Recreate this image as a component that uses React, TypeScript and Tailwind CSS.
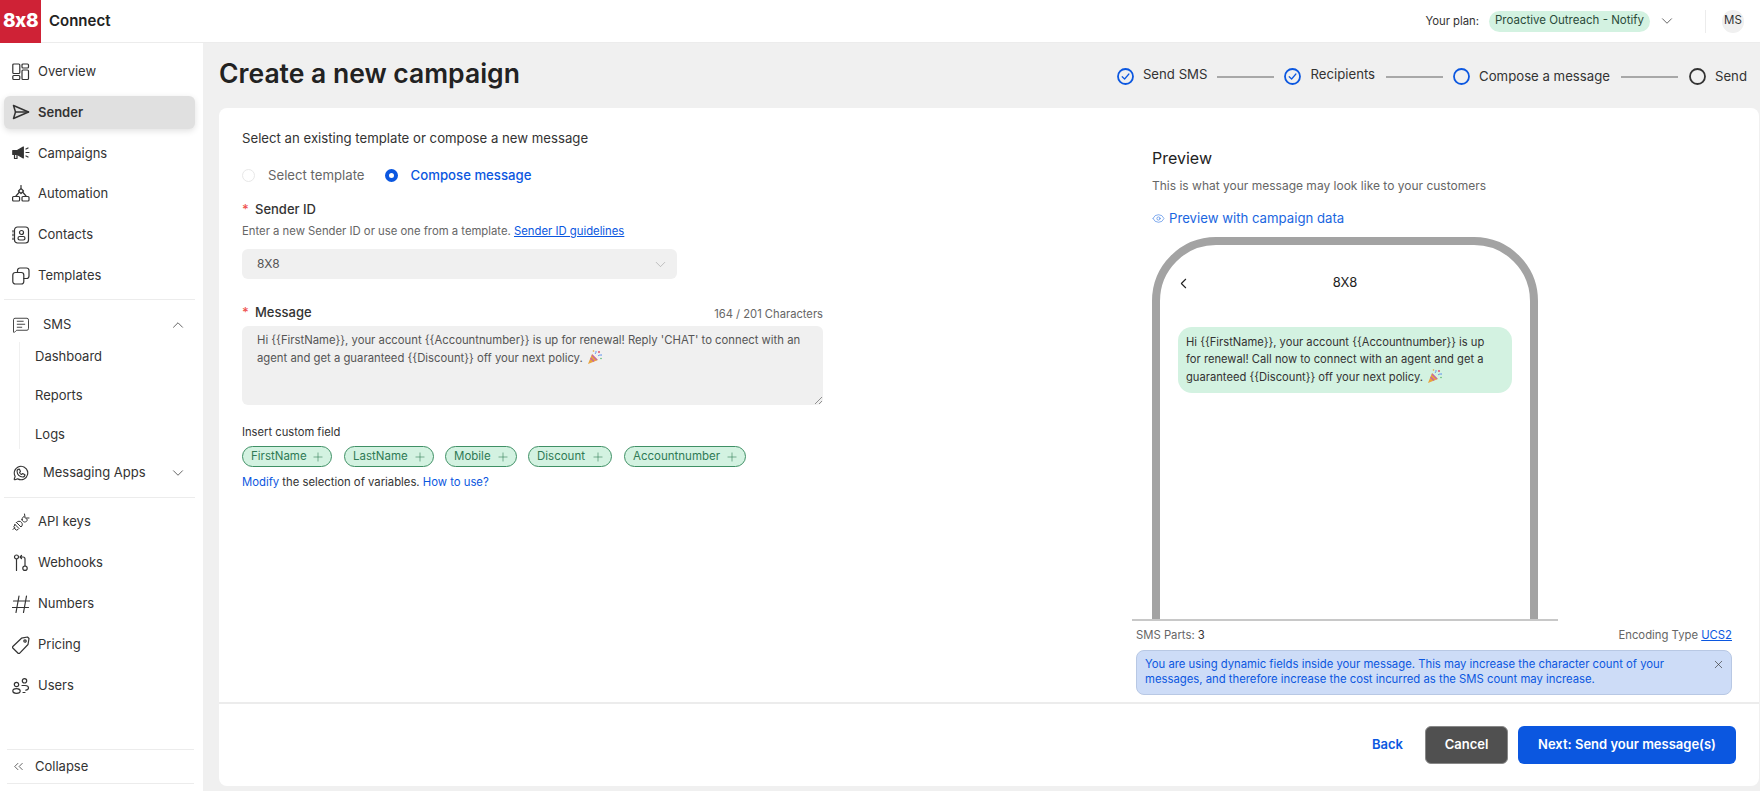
import type { ReactNode } from 'react';
import { ChevronDown, ChevronLeft, ChevronUp, ChevronsLeft, Eye, MessageSquareText, Plus, X } from 'lucide-react';
import { PiWhatsappLogo } from 'react-icons/pi';

const font = { fontFamily: 'Inter, "Noto Sans", sans-serif' };

const replyText = "Hi {{FirstName}}, your account {{Accountnumber}} is up for renewal! Reply 'CHAT' to connect with an agent and get a guaranteed {{Discount}} off your next policy. ";
const previewText = 'Hi {{FirstName}}, your account {{Accountnumber}} is up for renewal! Call now to connect with an agent and get a guaranteed {{Discount}} off your next policy. ';

function Icon({ children }: { children: ReactNode }) {
  return (
    <svg width="18" height="18" viewBox="0 0 18 18" fill="none" stroke="#333" strokeWidth="1.2" strokeLinecap="round" strokeLinejoin="round" className="shrink-0">
      {children}
    </svg>
  );
}

const OverviewIcon = () => (
  <Icon>
    <rect x="0.800" y="1" width="7" height="9.500" rx="1" />
    <rect x="0.800" y="12.500" width="7" height="4" rx="1" />
    <rect x="10" y="1" width="6.500" height="4" rx="1" />
    <rect x="10" y="7" width="6.500" height="9.500" rx="1" />
  </Icon>
);
const SenderIcon = () => (
  <Icon>
    <path d="M1.500 2.500 16.500 9 1.500 15.500l2-6.500-2-6.500Z" strokeWidth="1.500" />
    <path d="M3.500 9h13" strokeWidth="1.500" />
  </Icon>
);
const CampaignIcon = () => (
  <Icon>
    <path d="M0.800 6.500h4.500l6-3.500v11l-6-3.500H0.800V6.500Z" fill="#333" />
    <path d="M2.500 11v3.500h2.500V11" />
    <path d="M14 5l2-1M14 8.500h3M14 12l2 1" />
  </Icon>
);
const AutomationIcon = () => (
  <Icon>
    <path d="M9 0.500v3M9 3.500 6.500 6 9 8.500 11.500 6 9 3.500ZM7 7.500l-3 3.500M11 7.500l3 3.500" />
    <rect x="0.600" y="11.500" width="7" height="4.500" rx="1" />
    <rect x="10" y="11.500" width="7" height="4.500" rx="1" />
  </Icon>
);
const ContactsIcon = () => (
  <Icon>
    <rect x="2.500" y="1" width="14" height="16" rx="3" />
    <circle cx="9.500" cy="6.500" r="2" />
    <rect x="6" y="10.500" width="7" height="3.500" rx="1.700" />
    <path d="M1 4.500V6M1 8.200v1.500M1 12v1.500" />
  </Icon>
);
const TemplatesIcon = () => (
  <Icon>
    <rect x="0.800" y="5.500" width="11" height="11.500" rx="2.500" />
    <path d="M5.500 5.500V3.500A2.500 2.500 0 0 1 8 1h6.500A2.500 2.500 0 0 1 17 3.500v5.500a2.500 2.500 0 0 1-2.500 2.500h-2.700" />
  </Icon>
);
const ApiIcon = () => (
  <Icon>
    <path d="M1 16.500 2.500 15M3 11.500l4 4-1 1a2 2 0 0 1-3-.500l-.500-1a2 2 0 0 1 .500-3l0-.500ZM4.500 9.500l4.500 4.500a3 3 0 0 0 .500-4.500 3 3 0 0 0-5-0Z" strokeWidth="1" />
    <path d="M10 6.500c0-1.500 1-2.500 2-3l3.500 3.500c-.500 1-1.500 2-3 2-1.500-.500-2.500-1-2.500-2.500ZM12.500 1l.500 3M17 5l-2.500 0" strokeWidth="1" />
  </Icon>
);
const WebhookIcon = () => (
  <Icon>
    <circle cx="4.500" cy="3" r="2" />
    <path d="M4.500 5v11.500M9.500 1.500 8 3l1.500 1.500M8 3h3a2 2 0 0 1 2 2v7" />
    <circle cx="13" cy="14.200" r="2.200" />
  </Icon>
);
const NumbersIcon = () => (
  <Icon>
    <path d="M7 1 4 17.500M14.500 1l-3 16.500M1.500 6H17.500M0.500 12.500H16.500" />
  </Icon>
);
const PricingIcon = () => (
  <Icon>
    <path d="M0.800 10.500 9.500 2.200 15.500 1 17 2.500l-1 6-8.500 8.800a1 1 0 0 1-1.400 0L0.800 12a1 1 0 0 1 0-1.500Z" />
    <circle cx="13" cy="5" r="1.200" />
  </Icon>
);
const UsersIcon = () => (
  <Icon>
    <circle cx="4.500" cy="7.500" r="2.200" />
    <ellipse cx="4.500" cy="14" rx="3.700" ry="2.300" />
    <circle cx="12.500" cy="3.800" r="2.200" />
    <path d="M10 8.500h3c2 0 3.500 1 3.500 2.300 0 1.300-1 2.200-2.700 2.400M11 15.500h2" />
  </Icon>
);

function NavItem({ icon, label, active }: { icon: ReactNode; label: string; active?: boolean }) {
  return (
    <div className={`flex items-center gap-[8px] h-[33px] ml-1 mr-2 px-2 rounded-md text-[13px] text-[#333] ${active ? 'bg-[#e0e0e0] font-semibold shadow-[0_2px_6px_rgba(0,0,0,0.12)]' : ''}`}>
      {icon}
      <span>{label}</span>
    </div>
  );
}

function Sidebar() {
  return (
    <aside className="w-[203px] shrink-0 bg-white flex flex-col">
      <div className="flex flex-col gap-[7.900px] pt-[12px]">
        <NavItem icon={<OverviewIcon />} label="Overview" />
        <NavItem icon={<SenderIcon />} label="Sender" active />
        <NavItem icon={<CampaignIcon />} label="Campaigns" />
        <NavItem icon={<AutomationIcon />} label="Automation" />
        <NavItem icon={<ContactsIcon />} label="Contacts" />
        <NavItem icon={<TemplatesIcon />} label="Templates" />
      </div>
      <div className="h-px bg-[#ececec] ml-1 mr-2 mt-[7px]" />
      <div className="flex items-center h-[33px] ml-1 mr-2 mt-[8px] px-2 text-[13px] text-[#333]">
        <MessageSquareText size={18} strokeWidth={1.2} color="#333" />
        <span className="ml-[13px]">SMS</span>
        <ChevronUp size={18} strokeWidth={1} color="#333" className="ml-auto" />
      </div>
      <div className="ml-[19px] mt-[1px] border-l border-[#f0f0f0] pl-[15px] text-[13px] text-[#333] flex flex-col h-[107px] justify-between pt-[5px] pb-[5px]">
        <span>Dashboard</span>
        <span>Reports</span>
        <span>Logs</span>
      </div>
      <div className="flex items-center h-[33px] ml-1 mr-2 mt-[7px] px-2 text-[13px] text-[#333]">
        <PiWhatsappLogo size={18} color="#333" />
        <span className="ml-[13px]">Messaging Apps</span>
        <ChevronDown size={18} strokeWidth={1} color="#333" className="ml-auto" />
      </div>
      <div className="h-px bg-[#ececec] ml-1 mr-2 mt-[8px]" />
      <div className="flex flex-col gap-[7.900px] mt-[7px]">
        <NavItem icon={<ApiIcon />} label="API keys" />
        <NavItem icon={<WebhookIcon />} label="Webhooks" />
        <NavItem icon={<NumbersIcon />} label="Numbers" />
        <NavItem icon={<PricingIcon />} label="Pricing" />
        <NavItem icon={<UsersIcon />} label="Users" />
      </div>
      <div className="mt-auto ml-[7px] mr-[9px] mb-[7px] border-y border-[#ececec] h-[35px] flex items-center gap-[9px] pl-[4px] text-[13px] text-[#333]">
        <ChevronsLeft size={15} strokeWidth={1.2} color="#333" />
        <span>Collapse</span>
      </div>
    </aside>
  );
}

function Party() {
  return (
    <svg width="16" height="16" viewBox="0 0 16 16" className="inline-block align-[-3px] ml-[1px]">
      <path d="M1 15 5 5l6 6-10 4Z" fill="#e8a33d" />
      <path d="M3.500 9 7 12.500M5 6 10 11" stroke="#c45fb0" strokeWidth="1.100" />
      <path d="M8 5c1-1 1-2 1-3M11 7c1-1 2-1 4-1" stroke="#5b8def" strokeWidth="1" fill="none" />
      <circle cx="12" cy="3" r="1" fill="#e2556c" />
      <circle cx="14" cy="9.500" r="0.800" fill="#5bb974" />
      <circle cx="6.500" cy="2" r="0.800" fill="#e8a33d" />
    </svg>
  );
}

function Step({ label, state }: { label: string; state: 'done' | 'current' | 'todo' }) {
  return (
    <div className="flex items-center whitespace-nowrap">
      <svg width="17" height="17" viewBox="0 0 17 17" fill="none" className="shrink-0">
        <circle cx="8.500" cy="8.500" r="7.500" stroke={state === 'todo' ? '#333' : '#0b57e0'} strokeWidth="1.800" />
        {state === 'done' && <path d="M5.200 8.700 7.600 11l4.300-5" stroke="#0b57e0" strokeWidth="1.200" strokeLinecap="round" strokeLinejoin="round" />}
      </svg>
      <span className={`ml-[9px] text-[13.200px] text-[#333] ${state === 'done' ? '-translate-y-[2px]' : ''}`}>{label}</span>
    </div>
  );
}

function Line({ className }: { className: string }) {
  return <div className={`w-[57px] h-[2px] bg-[#a8a8a8] ${className}`} />;
}

function Chip({ label, width }: { label: string; width: string }) {
  return (
    <span className={`${width} h-[21px] rounded-full bg-[#d3f2e1] border border-[#3f9065] text-[#2f7a55] text-[11.500px] flex items-center justify-between pl-[8px] pr-[6px]`}>
      {label}
      <Plus size={14} strokeWidth={1} />
    </span>
  );
}

function ComposeForm() {
  return (
    <div className="w-[581px] ml-[23px] shrink-0 pt-[21px]">
      <p className="text-[13.200px] leading-[18px] text-[#333]">Select an existing template or compose a new message</p>
      <div className="flex items-center mt-[19px] text-[13.200px] leading-[18px]">
        <span className="w-[13px] h-[13px] rounded-full border border-[#e8e8e8]" />
        <span className="ml-[13px] text-[#666]">Select template</span>
        <span className="ml-[20px] w-[13px] h-[13px] rounded-full border-[4px] border-[#0b57e0] bg-white" />
        <span className="ml-[13px] text-[#0b57e0] font-medium">Compose message</span>
      </div>
      <div className="flex items-center mt-[16px] text-[13px] leading-[18px] font-medium text-[#333]">
        <span className="w-[13px] text-[#ef5350]">*</span>
        <span>Sender ID</span>
      </div>
      <p className="mt-[5px] text-[11.300px] leading-[16px] text-[#666]">
        Enter a new Sender ID or use one from a template. <a className="text-[#0b57e0] underline">Sender ID guidelines</a>
      </p>
      <div className="mt-[10px] w-[435px] h-[30px] rounded-md bg-[#f0f0f0] flex items-center justify-between pl-[15px] pr-[8px] text-[12px] text-[#555]">
        8X8
        <ChevronDown size={17} strokeWidth={0.8} color="#999" />
      </div>
      <div className="flex items-center mt-[24px] text-[13px] leading-[18px] font-medium text-[#333]">
        <span className="w-[13px] text-[#ef5350]">*</span>
        <span>Message</span>
        <span className="ml-auto text-[11.200px] font-normal text-[#666] translate-y-[2px]">164 / 201 Characters</span>
      </div>
      <div className="relative mt-[5px] h-[79px] rounded-md bg-[#f0f0f0] pl-[15px] pr-[10px] pt-[6px] text-[11.300px] leading-[17px] text-[#555]">
        {replyText}<Party />
        <svg width="8" height="8" viewBox="0 0 8 8" className="absolute right-[1px] bottom-[1px]" stroke="#777" strokeWidth="0.800">
          <path d="M1 8 8 1M5 8l3-3" />
        </svg>
      </div>
      <p className="mt-[19px] text-[11.200px] leading-[16px] text-[#333]">Insert custom field</p>
      <div className="flex mt-[6px]">
        <Chip label="FirstName" width="w-[90px]" />
        <span className="w-[12px]" />
        <Chip label="LastName" width="w-[90px]" />
        <span className="w-[11px]" />
        <Chip label="Mobile" width="w-[72px]" />
        <span className="w-[11px]" />
        <Chip label="Discount" width="w-[84px]" />
        <span className="w-[12px]" />
        <Chip label="Accountnumber" width="w-[122px]" />
      </div>
      <p className="mt-[7px] text-[11.300px] leading-[16px] text-[#333]">
        <a className="text-[#0b57e0]">Modify</a> the selection of variables. <a className="text-[#0b57e0]">How to use?</a>
      </p>
    </div>
  );
}

function Preview() {
  return (
    <div className="ml-auto mr-[27px] w-[600px] flex flex-col shrink-0">
      <div className="pl-[20px] pt-[40px]">
        <h2 className="text-[16px] leading-[20px] text-[#222]">Preview</h2>
        <p className="mt-[10px] text-[12px] leading-[16px] text-[#666]">This is what your message may look like to your customers</p>
        <div className="mt-[15px] flex items-center gap-[4px] text-[13.200px] leading-[18px] text-[#1a66e0]">
          <Eye size={13} strokeWidth={1} />
          Preview with campaign data
        </div>
      </div>
      <div className="w-[426px] h-[384px] mt-[10px] border-b-2 border-[#c8c8c8] pl-[20px] overflow-hidden">
        <div className="w-[386px] h-[400px] border-[8px] border-[#a3a3a3] rounded-t-[64px] px-[18px]">
          <div className="relative flex items-center justify-center h-[72px] mt-[2px] mb-[8px] text-[13px] text-[#222]">
            <ChevronLeft size={17} strokeWidth={1.500} className="absolute left-[-3px]" />
            8X8
          </div>
          <div className="w-[334px] h-[66px] rounded-[14px] bg-[#d3f2e1] pl-[8px] pr-[24px] pt-[7px] text-[11.200px] leading-[17px] text-[#333]">
            {previewText}<Party />
          </div>
        </div>
      </div>
      <div className="flex justify-between mt-[6px] pl-[4px] text-[11.300px] leading-[16px] text-[#666]">
        <span>SMS Parts: <span className="text-[#333]">3</span></span>
        <span>Encoding Type <a className="text-[#0b57e0] underline">UCS2</a></span>
      </div>
      <div className="mt-[7px] ml-[4px] h-[45px] rounded-lg bg-[#cddcf7] border border-[#b8c8e4] pl-[8px] pr-[6px] flex justify-between text-[11.300px] leading-[15px] text-[#0b57e0] pt-[6px]">
        <span className="w-[520px]">You are using dynamic fields inside your message. This may increase the character count of your messages, and therefore increase the cost incurred as the SMS count may increase.</span>
        <X size={13} strokeWidth={1.2} color="#333" className="shrink-0 mt-[1px]" />
      </div>
    </div>
  );
}

export default function App() {
  return (
    <div style={font} className="h-screen flex flex-col bg-[#f0f0f0] overflow-hidden">
      <header className="h-[43px] shrink-0 bg-white border-b border-[#ececec] flex items-center">
        <div className="w-[41px] h-[43px] bg-[#cf2236] flex items-center justify-center text-white font-extrabold text-[19px] tracking-[-0.500px]">8x8</div>
        <span className="ml-[8px] text-[15px] font-semibold text-[#222]">Connect</span>
        <span className="ml-auto text-[11.300px] text-[#333]">Your plan:</span>
        <span className="ml-[10px] w-[161px] h-[21px] rounded-full bg-[#d3f2e1] flex items-center justify-center text-[11.500px] text-[#2b4a3a]">Proactive Outreach - Notify</span>
        <ChevronDown size={18} strokeWidth={1} color="#333" className="ml-[8px]" />
        <div className="ml-[29px] w-px h-[23px] bg-[#ececec]" />
        <span className="ml-[16px] mr-[16px] w-[22px] h-[23px] rounded-full bg-[#f0f0f0] flex items-center justify-center text-[11.500px] text-[#333]">MS</span>
      </header>
      <div className="flex-1 flex min-h-0">
        <Sidebar />
        <main className="flex-1 min-w-0 pl-[16px] pr-[1px] flex flex-col">
          <div className="h-[65px] shrink-0 flex items-center justify-between">
            <h1 className="text-[26.500px] font-semibold text-[#222] -translate-y-[2px]">Create a new campaign</h1>
            <div className="flex items-center mr-[12px] mt-[3px]">
              <Step label="Send SMS" state="done" />
              <Line className="mx-[10px]" />
              <Step label="Recipients" state="done" />
              <Line className="ml-[11px] mr-[10px]" />
              <Step label="Compose a message" state="current" />
              <Line className="mx-[11px]" />
              <Step label="Send" state="todo" />
            </div>
          </div>
          <div className="h-[678px] shrink-0 bg-white rounded-lg flex flex-col">
            <div className="flex-1 flex min-h-0">
              <ComposeForm />
              <Preview />
            </div>
            <div className="h-[84px] shrink-0 border-t-2 border-[#ececec] flex items-start justify-end pt-[22px] pr-[23px]">
              <div className="flex items-center">
                <button className="text-[13px] font-semibold text-[#0b57e0] mr-[22px]">Back</button>
                <button className="w-[83px] h-[38px] rounded-md bg-[#505050] border border-[#888] text-white text-[13px] font-semibold">Cancel</button>
                <button className="ml-[10px] w-[218px] h-[38px] rounded-md bg-[#0b57e0] text-white text-[13px] font-semibold">Next: Send your message(s)</button>
              </div>
            </div>
          </div>
        </main>
      </div>
    </div>
  );
}
